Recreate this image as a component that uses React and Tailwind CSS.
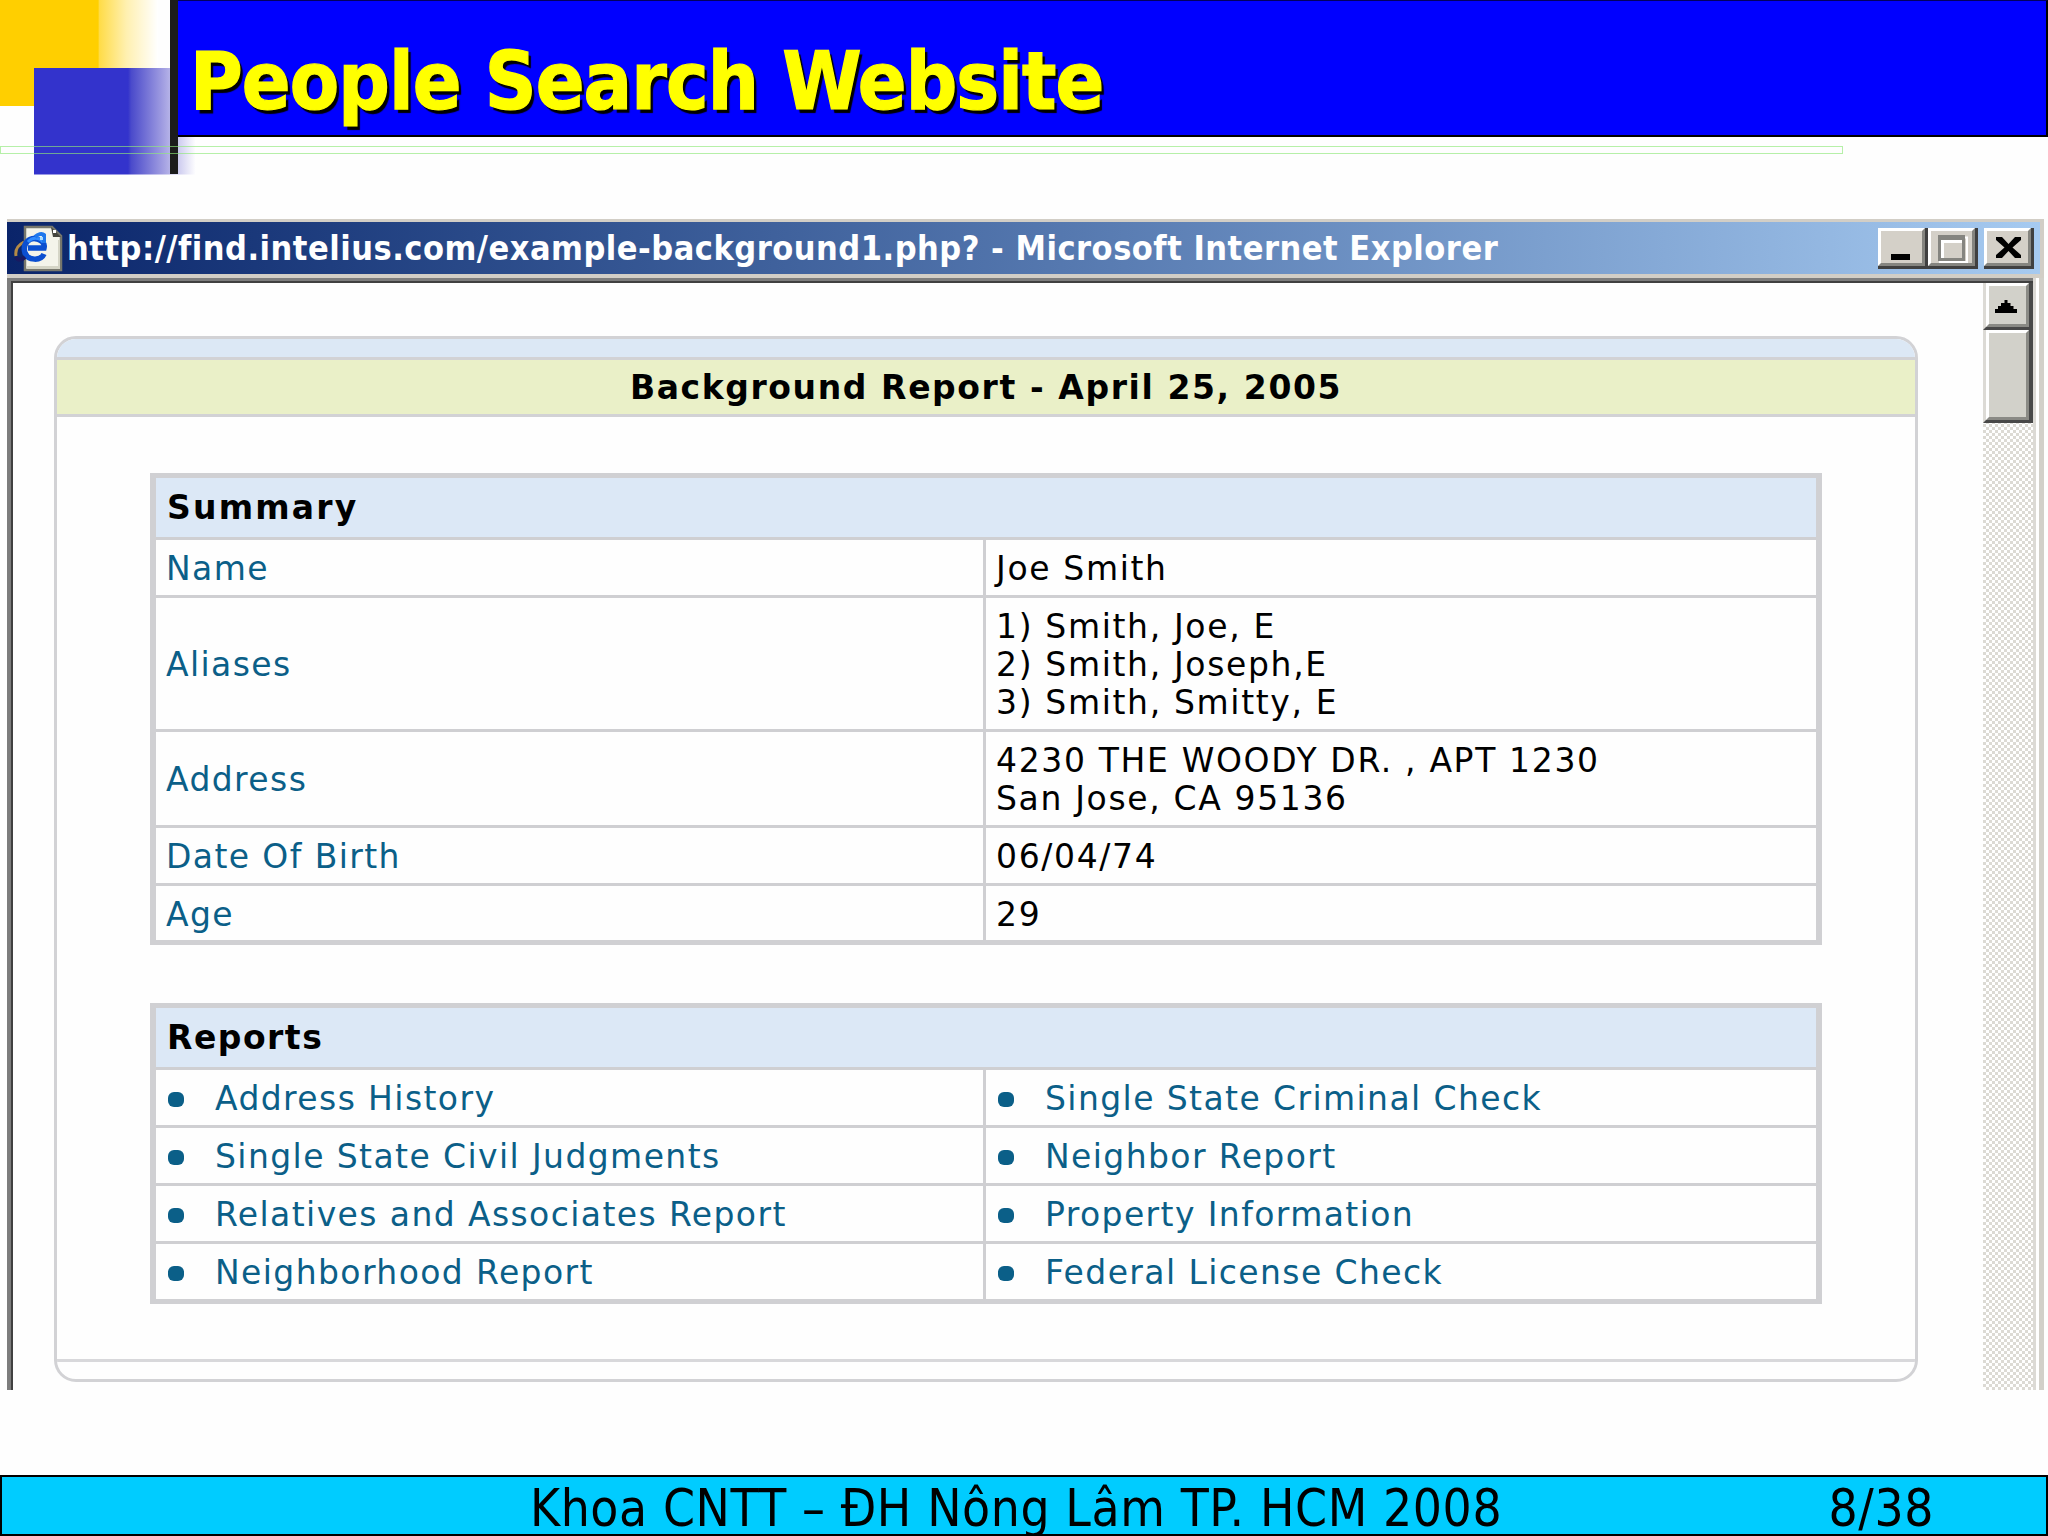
const summary = [
  {label: 'Name', lines: ['Joe Smith'], height: 'h-[58px]'},
  {
    label: 'Aliases',
    lines: ['1) Smith, Joe, E', '2) Smith, Joseph,E', '3) Smith, Smitty, E'],
    height: 'h-[134px]',
  },
  {
    label: 'Address',
    lines: ['4230 THE WOODY DR. , APT 1230', 'San Jose, CA 95136'],
    height: 'h-[96px]',
  },
  {label: 'Date Of Birth', lines: ['06/04/74'], height: 'h-[58px]'},
  {label: 'Age', lines: ['29'], height: 'h-[57px]'},
];

const reports = [
  ['Address History', 'Single State Criminal Check'],
  ['Single State Civil Judgments', 'Neighbor Report'],
  ['Relatives and Associates Report', 'Property Information'],
  ['Neighborhood Report', 'Federal License Check'],
];

export default function App() {
  return (
    <div className="w-[2048px] h-[1536px] flex flex-col overflow-hidden bg-[#fefefe] font-['DejaVu_Sans','Noto_Sans',sans-serif] text-black">
      <SlideHeader />
      <BrowserWindow />
      <SlideFooter />
    </div>
  );
}

function SlideHeader() {
  return (
    <header className="relative h-[219px] shrink-0">
      <Ornament />
      <div className="relative ml-[178px] h-[137px] border-t border-r-2 border-b-2 border-t-[#000060] border-r-black border-b-black bg-[#0000ff] pt-[41px] pl-3">
        <h1 className="font-['DejaVu_Sans_Condensed','DejaVu_Sans',sans-serif] text-[80px] leading-none font-bold tracking-[-0.9px] whitespace-nowrap text-[#ffff00] [-webkit-text-stroke:1.2px_#ffff00] [text-shadow:3px_4px_1px_#000]">
          People Search Website
        </h1>
      </div>
    </header>
  );
}

function Ornament() {
  return (
    <svg className="absolute top-0 left-0" width="1844" height="176" viewBox="0 0 1844 176">
      <defs>
        <linearGradient id="gold" x1="0" x2="1" y1="0" y2="0">
          <stop offset="0" stopColor="#ffcf00" />
          <stop offset="0.62" stopColor="#ffcf00" />
          <stop offset="0.63" stopColor="#ffdc48" />
          <stop offset="0.8" stopColor="#fff0b0" />
          <stop offset="1" stopColor="#ffffff" />
        </linearGradient>
        <linearGradient id="indigo" x1="0" x2="1" y1="0" y2="0">
          <stop offset="0" stopColor="#3333cc" />
          <stop offset="0.58" stopColor="#3333cc" />
          <stop offset="0.6" stopColor="#4a4acb" />
          <stop offset="0.8" stopColor="#a3a0e2" />
          <stop offset="1" stopColor="#ffffff" />
        </linearGradient>
      </defs>
      <rect width="158" height="106" fill="url(#gold)" />
      <rect x="34" y="68" width="162" height="106.5" fill="url(#indigo)" />
      <rect x="170" width="8" height="174" fill="#1c1c1c" />
      <rect x="0.5" y="146.5" width="1842" height="7" fill="none" stroke="#8fe87a" strokeOpacity="0.65" />
    </svg>
  );
}

function BrowserWindow() {
  return (
    <main className="ml-[7px] flex h-[1171px] w-[2037px] shrink-0 flex-col">
      <div className="flex h-[59px] flex-col border-t-[3px] border-r-4 border-b-4 border-[#d2cec6]">
        <TitleBar />
      </div>
      <div className="flex flex-1">
        <div className="flex flex-1 border-t-3 border-l-4 border-[#7d7d7d]">
          <div className="flex flex-1 border-t-2 border-l-2 border-[#404040]">
            <div className="flex-1 pt-[53px] pl-[41px]">
              <ReportCard />
            </div>
            <ScrollBar />
          </div>
        </div>
        <div className="w-[3px] bg-[#dcdad5]" />
        <div className="w-[3px] bg-white" />
        <div className="w-[5px] bg-[#d2d0c9]" />
      </div>
    </main>
  );
}

function TitleBar() {
  return (
    <div className="flex h-[52px] items-center bg-linear-to-r from-[#0a246a] to-[#a6caf0]">
      <PageIcon />
      <span className="ml-1 font-['DejaVu_Sans_Condensed','DejaVu_Sans',sans-serif] text-[34px] leading-none font-bold tracking-[0.5px] whitespace-nowrap text-white">
        http://find.intelius.com/example-background1.php? - Microsoft Internet Explorer
      </span>
      <div className="mr-[6px] ml-auto flex">
        <CaptionButton>
          <rect x="10" y="23" width="19" height="6" fill="#000" />
        </CaptionButton>
        <CaptionButton>
          <path d="M9.500 6.500H36V31H8" fill="none" stroke="#fff" strokeWidth="2" />
          <rect x="8.5" y="6" width="24" height="22.500" fill="#d4d0c8" stroke="#858580" strokeWidth="3" />
          <path d="M7 6.500H34" stroke="#858580" strokeWidth="5" />
          <path d="M11.500 27V10.500H31" fill="none" stroke="#fff" strokeWidth="3" />
        </CaptionButton>
        <div className="w-[6px]" />
        <CaptionButton>
          <path d="M9 6h6l6.500 7L28 6h6v3l-8.500 7.500L34 24v3h-6l-6.500-7L15 27H9v-3l8.500-7.500L9 9z" fill="#000" />
        </CaptionButton>
      </div>
    </div>
  );
}

function CaptionButton({children}) {
  return (
    <div className="h-[41px] w-[50px] border-r-3 border-b-3 border-[#404040]">
      <div className="h-full border-t-3 border-r-3 border-b-3 border-l-3 border-t-white border-r-[#858580] border-b-[#858580] border-l-white bg-[#d4d0c8]">
        <svg className="block" width="41" height="32" viewBox="0 0 41 32">
          {children}
        </svg>
      </div>
    </div>
  );
}

function PageIcon() {
  return (
    <svg className="ml-[5px]" width="51" height="48" viewBox="0 0 51 48">
      <path d="M13 3H40L49 12V46H13Z" fill="#f4f4ea" stroke="#77776c" strokeWidth="2.500" />
      <path d="M15 42H46V16H48V45H15Z" fill="#d5d5c6" />
      <path d="M39 3L49 13H41Z" fill="#45453e" />
      <path d="M41 6h3v3h-3z" fill="#fff" />
      <path d="M4 32C3 26 6 21 12 18" fill="none" stroke="#b58a45" strokeWidth="3" />
      <path
        d="M32 30C29 37 16 37 13 29C10 19 18 13 25 15C31 17 33 20 32 24H16"
        fill="none"
        stroke="#0b4fd0"
        strokeWidth="5.500"
      />
      <path d="M16 18C20 13 27 13 31 18" fill="none" stroke="#2f8cff" strokeWidth="3" />
      <path d="M23 13C26 10 30 9 32 11V19" fill="none" stroke="#1f78ec" strokeWidth="4" />
      <path d="M4 33C6 37 10 36 13 33" fill="none" stroke="#1a1a60" strokeWidth="4" />
      <path d="M28 13h3v3h-3z" fill="#a9dcff" />
    </svg>
  );
}

function ScrollBar() {
  return (
    <div className="flex w-[50px] flex-col bg-[repeating-conic-gradient(#dcdad4_0_25%,#ffffff_0_50%)] bg-[length:6px_6px]">
      <ScrollPiece height="h-[47px]">
        <svg className="mt-[14px] ml-[6px] block" width="22" height="13" viewBox="0 0 22 13">
          <path d="M9.500 0h3v3h3v3h3v3h3.500v4H0V9h3V6h3V3h3.500z" fill="#000" />
        </svg>
      </ScrollPiece>
      <ScrollPiece height="h-[93px]" />
    </div>
  );
}

function ScrollPiece({height, children}) {
  return (
    <div className={`${height} border-r-4 border-b-3 border-l-3 border-r-[#484848] border-b-[#484848] border-l-[#dcdad5]`}>
      <div className="h-full border-t-3 border-r-3 border-b-3 border-l-3 border-t-white border-r-[#8a8a85] border-b-[#8a8a85] border-l-white bg-[#d2d1ca]">
        {children}
      </div>
    </div>
  );
}

function ReportCard() {
  return (
    <section className="flex h-[1046px] w-[1864px] flex-col overflow-hidden rounded-[22px] border-3 border-[#d2d2d5]">
      <div className="h-[21px] border-b-3 border-[#d2d2d5] bg-[#dce8f5]" />
      <h2 className="flex h-[57px] items-center justify-center border-b-3 border-[#d2d2d5] bg-[#eaf0c8] pt-px text-[33px] leading-none font-bold tracking-[1.6px] whitespace-nowrap">
        Background Report - April 25, 2005
      </h2>
      <div className="flex h-[945px] flex-col gap-[58px] border-b-3 border-[#d8d8db] pt-14 pl-[93px]">
        <Panel title="Summary" spacing="tracking-[2.2px]">
          {summary.map((row) => (
            <div key={row.label} className={`flex border-t-3 border-[#cfcfd2] ${row.height}`}>
              <Cell>
                <span className="text-[#0b5f88]">{row.label}</span>
              </Cell>
              <Cell divided>
                <div className="tracking-[1.65px]">
                  {row.lines.map((line) => (
                    <div key={line}>{line}</div>
                  ))}
                </div>
              </Cell>
            </div>
          ))}
        </Panel>
        <Panel title="Reports" spacing="tracking-[1.5px]">
          {reports.map(([left, right]) => (
            <div key={left} className="flex h-[58px] border-t-3 border-[#cfcfd2]">
              <Cell>
                <ReportLink>{left}</ReportLink>
              </Cell>
              <Cell divided>
                <ReportLink>{right}</ReportLink>
              </Cell>
            </div>
          ))}
        </Panel>
      </div>
    </section>
  );
}

function Panel({title, spacing, children}) {
  return (
    <div className="w-[1672px] border-x-6 border-y-5 border-[#d0d0d3]">
      <h3 className={`flex h-[59px] items-center bg-[#dce8f6] pl-[11px] text-[33px] leading-none font-bold ${spacing}`}>
        {title}
      </h3>
      {children}
    </div>
  );
}

function Cell({divided, children}) {
  return (
    <div
      className={`flex items-center pt-[3px] text-[33px] leading-[38px] tracking-[1.4px] whitespace-nowrap ${
        divided ? 'flex-1 border-l-3 border-[#cfcfd2] pl-[10px]' : 'w-[827px] pl-[10px]'
      }`}
    >
      {children}
    </div>
  );
}

function ReportLink({children}) {
  return (
    <div className="flex items-center text-[#0b5f88]">
      <span className="mr-[31px] ml-[2px] h-[15px] w-4 rounded-[6px] bg-current" />
      {children}
    </div>
  );
}

function SlideFooter() {
  return (
    <footer className="mt-auto flex h-[61px] shrink-0 items-start border-2 border-black bg-[#00ccff] pt-[6px] font-['DejaVu_Sans_Condensed','DejaVu_Sans',sans-serif] text-[51px] leading-none tracking-[0.6px] whitespace-nowrap">
      <span className="ml-[528px]">Khoa CNTT – ĐH Nông Lâm TP. HCM 2008</span>
      <span className="mr-[112px] ml-auto">8/38</span>
    </footer>
  );
}
